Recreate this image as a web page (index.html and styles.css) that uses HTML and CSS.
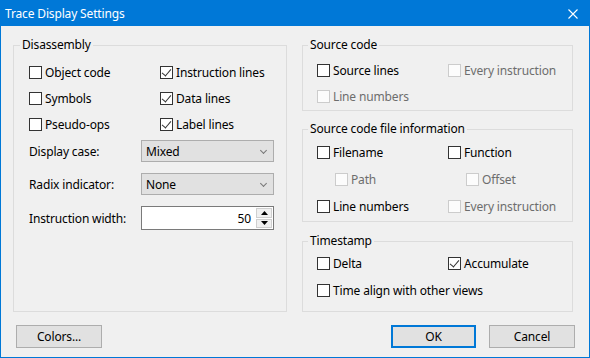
FILE: index.html
```html
<!DOCTYPE html>
<html>
<head>
  <meta charset="UTF-8">
  <title>Trace Display Settings</title>
  <link rel="stylesheet" href="styles.css">
</head>
<body>
  <div class="window">
    <div class="titlebar">
      <span class="title">Trace Display Settings</span>
      <span class="close">
        <svg width="10" height="10" viewBox="0 0 10 10"><path d="M0.5 0.5 L9.5 9.5 M9.5 0.5 L0.5 9.5" stroke="#fff" stroke-width="1.1" fill="none"/></svg>
      </span>
    </div>

    <div class="content">
      <div class="columns">
        <!-- Left: disassembly options -->
        <fieldset class="group disasm">
          <legend>Disassembly</legend>
          <div class="check-grid">
            <label class="check"><span class="box"></span>Object code</label>
            <label class="check"><span class="box checked"></span>Instruction lines</label>
            <label class="check"><span class="box"></span>Symbols</label>
            <label class="check"><span class="box checked"></span>Data lines</label>
            <label class="check"><span class="box"></span>Pseudo-ops</label>
            <label class="check"><span class="box checked"></span>Label lines</label>
          </div>

          <div class="field-row first">
            <span class="field-label">Display case:</span>
            <div class="combo">Mixed<span class="chevron"></span></div>
          </div>
          <div class="field-row">
            <span class="field-label">Radix indicator:</span>
            <div class="combo">None<span class="chevron"></span></div>
          </div>
          <div class="field-row">
            <span class="field-label">Instruction width:</span>
            <div class="spin">
              <span class="spin-value">50</span>
              <div class="spin-buttons">
                <span class="spin-btn"><svg width="7" height="4" viewBox="0 0 7 4"><path d="M3.5 0 L7 4 L0 4 Z" fill="#000"/></svg></span>
                <span class="spin-btn"><svg width="7" height="4" viewBox="0 0 7 4"><path d="M0 0 L7 0 L3.5 4 Z" fill="#000"/></svg></span>
              </div>
            </div>
          </div>
        </fieldset>

        <!-- Right: source and timestamp options -->
        <div class="right-col">
          <fieldset class="group source">
            <legend>Source code</legend>
            <div class="check-grid">
              <label class="check"><span class="box"></span>Source lines</label>
              <label class="check disabled"><span class="box"></span>Every instruction</label>
              <label class="check disabled"><span class="box"></span>Line numbers</label>
            </div>
          </fieldset>

          <fieldset class="group fileinfo">
            <legend>Source code file information</legend>
            <div class="check-grid tall">
              <label class="check"><span class="box"></span>Filename</label>
              <label class="check"><span class="box"></span>Function</label>
              <label class="check disabled indent"><span class="box"></span>Path</label>
              <label class="check disabled indent"><span class="box"></span>Offset</label>
              <label class="check"><span class="box"></span>Line numbers</label>
              <label class="check disabled"><span class="box"></span>Every instruction</label>
            </div>
          </fieldset>

          <fieldset class="group timestamp">
            <legend>Timestamp</legend>
            <div class="check-grid tall">
              <label class="check"><span class="box"></span>Delta</label>
              <label class="check"><span class="box checked"></span>Accumulate</label>
              <label class="check wide"><span class="box"></span>Time align with other views</label>
            </div>
          </fieldset>
        </div>
      </div>

      <div class="buttons">
        <button class="btn">Colors...</button>
        <div class="spacer"></div>
        <button class="btn default">OK</button>
        <button class="btn">Cancel</button>
      </div>
    </div>
  </div>
</body>
</html>
```

FILE: styles.css
```css
* {
  box-sizing: border-box;
}

body {
  margin: 0;
  font-family: "Noto Sans", "Open Sans", sans-serif;
  font-size: 12px;
  letter-spacing: -0.15px;
  color: #000;
  background-color: #fff;
}

.window {
  width: 590px;
  height: 358px;
  border: 1px solid #0078d7;
  background-color: #f0f0f0;
  display: flex;
  flex-direction: column;
}

.titlebar {
  height: 25px;
  background-color: #0078d7;
  color: #fff;
  display: flex;
  align-items: center;
  padding-left: 4px;
}

.title {
  flex: 1;
  line-height: 16px;
}

.close {
  width: 30px;
  display: flex;
  justify-content: center;
  padding-right: 2px;
}

.close svg {
  display: block;
}

.content {
  padding: 11px 16px 0 12px;
}

.columns {
  display: flex;
  gap: 15px;
  height: 275px;
}

.group {
  margin: 0;
  border: 1px solid #dcdcdc;
  padding: 0 0 0 15px;
  min-width: 0;
}

.group legend {
  padding: 0 2px;
  margin-left: -9px;
  line-height: 16px;
}

.disasm {
  width: 274px;
  padding-top: 6px;
}

.right-col {
  flex: 1;
  display: flex;
  flex-direction: column;
}

.right-col .group {
  padding-left: 14px;
}

.source {
  padding-top: 4px;
  padding-bottom: 1px;
}

.fileinfo {
  margin-top: 10px;
  padding-top: 2px;
  padding-bottom: 1px;
}

.timestamp {
  margin-top: 11px;
  padding-top: 1px;
  flex: 1;
}

/* checkboxes */
.check-grid {
  display: grid;
  grid-template-columns: 131px 1fr;
  grid-auto-rows: 26px;
}

.check-grid.tall {
  grid-auto-rows: 27px;
}

.check {
  display: flex;
  align-items: center;
  white-space: nowrap;
}

.check.wide {
  grid-column: span 2;
}

.check.indent {
  padding-left: 18px;
}

.box {
  width: 13px;
  height: 13px;
  border: 1px solid #333;
  background-color: #fff;
  margin-right: 3px;
  flex-shrink: 0;
  position: relative;
}

.box.checked::after {
  content: "";
  position: absolute;
  left: 3px;
  top: 0px;
  width: 4px;
  height: 8px;
  border-right: 1.3px solid #333;
  border-bottom: 1.3px solid #333;
  transform: rotate(40deg);
}

.check.disabled {
  color: #6d6d6d;
}

.check.disabled .box {
  border-color: #cccccc;
  background-color: #fcfcfc;
}

/* labelled fields */
.field-row {
  display: flex;
  align-items: center;
  margin-top: 11px;
}

.field-row.first {
  margin-top: 3px;
}

.field-label {
  width: 112px;
}

.combo {
  width: 133px;
  height: 22px;
  border: 1px solid #adadad;
  background-color: #e1e1e1;
  display: flex;
  align-items: center;
  padding-left: 4px;
  position: relative;
}

.chevron {
  position: absolute;
  right: 7px;
  top: 7px;
  width: 5px;
  height: 5px;
  border-right: 1px solid #777;
  border-bottom: 1px solid #777;
  transform: rotate(45deg);
}

.spin {
  width: 133px;
  height: 24px;
  border: 1px solid #7a7a7a;
  background-color: #fff;
  display: flex;
  align-items: center;
  padding: 1px;
}

.spin-value {
  flex: 1;
  text-align: right;
  padding-right: 5px;
}

.spin-buttons {
  width: 16px;
  height: 20px;
  display: flex;
  flex-direction: column;
  gap: 1px;
}

.spin-btn {
  flex: 1;
  background-color: #f0f0f0;
  border: 1px solid #cfcfcf;
  display: flex;
  align-items: center;
  justify-content: center;
}

.spin-btn svg {
  display: block;
}

/* bottom buttons */
.buttons {
  display: flex;
  gap: 13px;
  margin: 13px -2px 0 3px;
}

.spacer {
  flex: 1;
}

.btn {
  width: 86px;
  height: 23px;
  border: 1px solid #adadad;
  background-color: #e1e1e1;
  font-family: inherit;
  font-size: 12px;
  letter-spacing: inherit;
  color: #000;
  padding: 0;
}

.btn.default {
  width: 85px;
  border: 2px solid #0078d7;
}
```
